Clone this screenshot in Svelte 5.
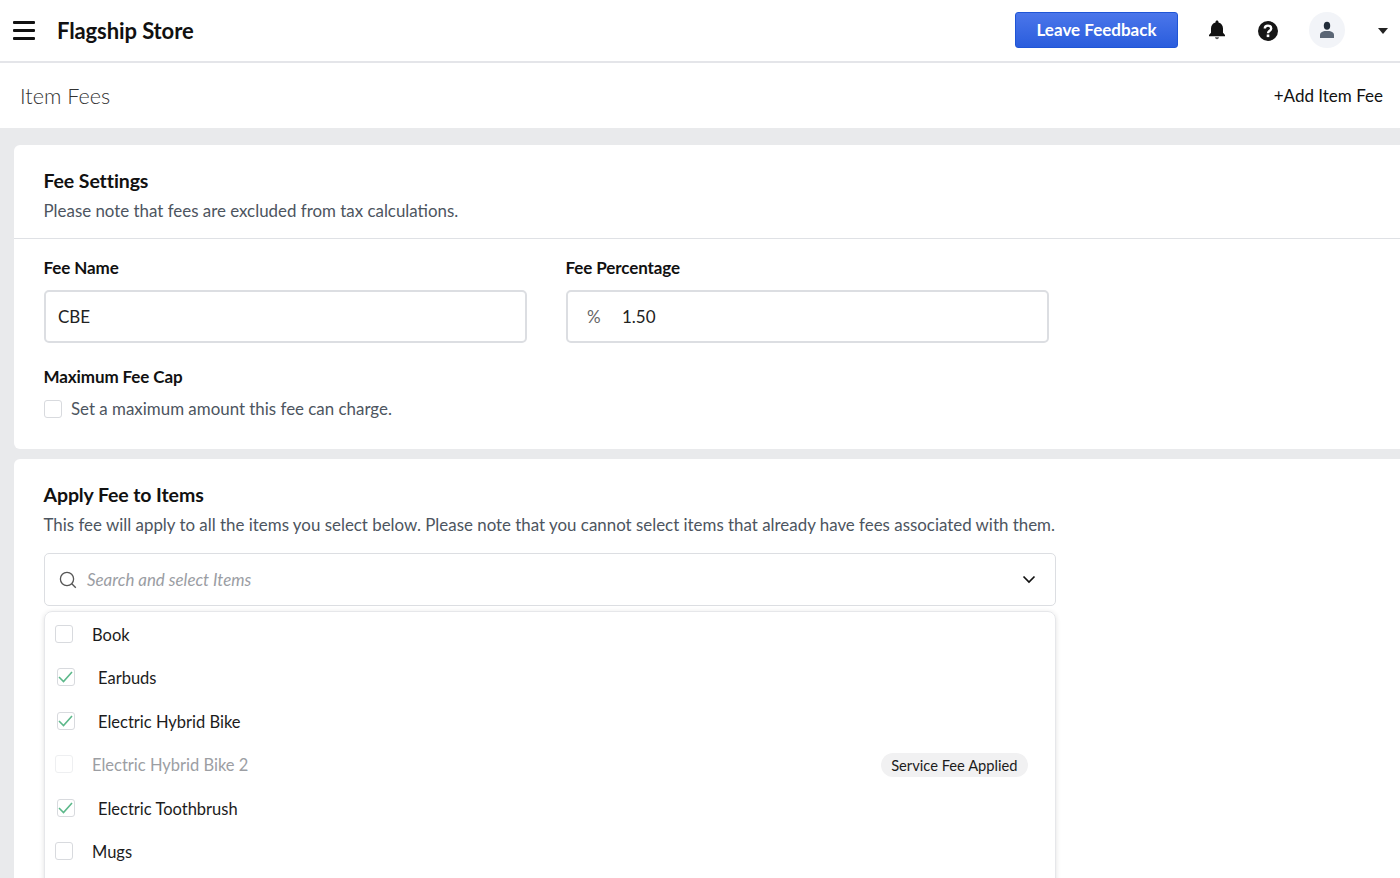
<script lang="ts">
	const items = [
		{ name: 'Book', state: 'off' },
		{ name: 'Earbuds', state: 'on' },
		{ name: 'Electric Hybrid Bike', state: 'on' },
		{ name: 'Electric Hybrid Bike 2', state: 'disabled', tag: 'Service Fee Applied' },
		{ name: 'Electric Toothbrush', state: 'on' },
		{ name: 'Mugs', state: 'off' }
	];
</script>

<div class="page">
	<header class="topbar">
		<button class="menu" aria-label="Menu">
			<span></span><span></span><span></span>
		</button>
		<div class="store">Flagship Store</div>
		<button class="feedback">Leave Feedback</button>
		<svg class="bell" width="20" height="22" viewBox="0 0 20 22">
			<path fill="#111" d="M10 1.5c-.9 0-1.5.6-1.5 1.5v.6C5.6 4.3 4 6.700 4 9.500v4.200L2 16v1.200h16V16l-2-2.300V9.500c0-2.800-1.600-5.200-4.500-5.900V3c0-.9-.6-1.500-1.500-1.500z" />
			<path fill="#555" d="M8 18.300h4c0 1.100-.9 1.900-2 1.900s-2-.8-2-1.900z" />
		</svg>
		<svg class="help" width="22" height="22" viewBox="0 0 22 22">
			<circle cx="11" cy="11" r="10" fill="#161616" />
			<path fill="none" stroke="#fff" stroke-width="2.400" d="M7.800 8.600c0-1.900 1.400-3 3.200-3s3.200 1.100 3.200 2.800c0 2.400-3.200 2.300-3.200 4.800" />
			<rect x="9.700" y="14.500" width="2.600" height="2.600" fill="#fff" />
		</svg>
		<div class="avatar">
			<svg width="16" height="18" viewBox="0 0 16 18">
				<ellipse cx="8" cy="4.800" rx="3.200" ry="4" fill="#222d3a" />
				<path fill="#5b6675" d="M1 17v-3.500c0-1.700 2.500-3 4.500-3.500h5c2 .5 4.500 1.800 4.500 3.500V17z" />
			</svg>
		</div>
		<div class="caret"></div>
	</header>

	<section class="pagehead">
		<h1>Item Fees</h1>
		<button class="add">+Add Item Fee</button>
	</section>

	<main class="content">
		<section class="card first">
			<div class="card-head">
				<h2>Fee Settings</h2>
				<p>Please note that fees are excluded from tax calculations.</p>
			</div>
			<div class="fields">
				<div class="row">
					<div class="field">
						<div class="label">Fee Name</div>
						<div class="input">CBE</div>
					</div>
					<div class="field">
						<div class="label">Fee Percentage</div>
						<div class="input"><span class="prefix">%</span>1.50</div>
					</div>
				</div>
				<div class="label cap">Maximum Fee Cap</div>
				<div class="capline">
					<span class="box"></span>
					<span>Set a maximum amount this fee can charge.</span>
				</div>
			</div>
		</section>

		<section class="card second">
			<h2>Apply Fee to Items</h2>
			<p>This fee will apply to all the items you select below. Please note that you cannot select items that already have fees associated with them.</p>
			<div class="search">
				<svg width="18" height="18" viewBox="0 0 18 18" fill="none" stroke="#555" stroke-width="1.300">
					<circle cx="8" cy="8" r="6.600" />
					<path d="M12.800 12.800l4 4" />
				</svg>
				<span class="placeholder">Search and select Items</span>
				<svg class="chev" width="14" height="9" viewBox="0 0 14 9" fill="none" stroke="#111" stroke-width="1.700">
					<path d="M1.500 1.500L7 7l5.500-5.500" />
				</svg>
			</div>
			<div class="list">
				{#each items as item}
					<div class="item {item.state}">
						<span class="box">
							{#if item.state === 'on'}
								<svg width="15" height="12" viewBox="0 0 15 12" fill="none" stroke="#5cb88a" stroke-width="1.600">
									<path d="M1 6l4.500 4.500L14 1" />
								</svg>
							{/if}
						</span>
						<span class="name">{item.name}</span>
						{#if item.tag}
							<span class="tag">{item.tag}</span>
						{/if}
					</div>
				{/each}
			</div>
		</section>
	</main>
</div>

<style>
	:global(body) {
		background: #e9eaec;
		font-family: Lato, 'Liberation Sans', sans-serif;
		color: #111;
	}

	button {
		font-family: inherit;
		border: none;
		background: none;
		padding: 0;
	}

	.page {
		height: 878px;
		overflow: hidden;
	}

	.topbar {
		display: flex;
		align-items: center;
		height: 61px;
		background: #fff;
		border-bottom: 2px solid #e4e5e9;
	}
	.menu {
		display: flex;
		flex-direction: column;
		gap: 5px;
		width: 22px;
		margin-left: 13px;
	}
	.menu span {
		height: 3px;
		background: #111;
		border-radius: 1px;
	}
	.store {
		margin-left: 22px;
		font-size: 22px;
		font-weight: 700;
		letter-spacing: -0.1px;
	}
	.feedback {
		margin: 0 0 2px auto;
		width: 163px;
		height: 36px;
		padding-bottom: 1px;
		border-radius: 3px;
		border: 1px solid #1f55d6;
		background: linear-gradient(#4b76ea, #2a5ddd);
		color: #fff;
		font-size: 17px;
		font-weight: 700;
	}
	.bell {
		margin: 0 0 1px 29px;
	}
	.help {
		margin-left: 30px;
	}
	.avatar {
		display: flex;
		align-items: center;
		justify-content: center;
		width: 36px;
		height: 36px;
		margin: 0 0 2px 30px;
		border-radius: 50%;
		background: #f2f4f8;
	}
	.caret {
		margin: 0 12px 0 33px;
		border-top: 6px solid #222;
		border-left: 5px solid transparent;
		border-right: 5px solid transparent;
	}

	.pagehead {
		display: flex;
		align-items: center;
		justify-content: space-between;
		height: 65px;
		padding: 0 17px 1px 20px;
		box-sizing: border-box;
		background: #fff;
	}
	h1 {
		margin: 2px 0 0;
		font-size: 21.600px;
		font-weight: 300;
		color: #333;
	}
	.add {
		font-size: 17px;
		color: #111;
	}

	.content {
		padding: 17px 0 0 14px;
	}
	.card {
		background: #fff;
		border-radius: 6px 0 0 6px;
	}
	.first {
		height: 304px;
		margin-bottom: 10px;
	}
	.card-head {
		height: 94px;
		padding: 23px 30px 0 29.500px;
		box-sizing: border-box;
		border-bottom: 1px solid #dfe1e5;
	}
	h2 {
		margin: 0;
		font-size: 19.500px;
		line-height: 26px;
		font-weight: 700;
		letter-spacing: -0.1px;
	}
	p {
		margin: 5px 0 0;
		font-size: 16.900px;
		line-height: 24px;
		color: #4d5560;
	}
	.fields {
		padding: 17px 30px 0 29.500px;
	}
	.row {
		display: flex;
		gap: 39px;
	}
	.field {
		width: 483px;
	}
	.label {
		font-size: 17px;
		line-height: 24px;
		font-weight: 700;
		letter-spacing: -0.1px;
	}
	.input {
		display: flex;
		align-items: center;
		height: 53px;
		margin-top: 10px;
		padding: 0 12.500px;
		box-sizing: border-box;
		border: 2px solid #dcdee2;
		border-radius: 5px;
		font-size: 17px;
		color: #222;
	}
	.prefix {
		width: 42px;
		padding-left: 7px;
		box-sizing: border-box;
		color: #666;
	}
	.cap {
		margin-top: 22px;
	}
	.capline {
		display: flex;
		align-items: center;
		gap: 9.500px;
		margin-top: 8px;
		font-size: 16.900px;
		line-height: 24px;
		color: #4d5560;
	}
	.box {
		display: flex;
		align-items: center;
		justify-content: center;
		flex: none;
		width: 18px;
		height: 18px;
		box-sizing: border-box;
		border: 1px solid #d8dade;
		border-radius: 3px;
		background: #fff;
	}

	.second {
		height: 500px;
		padding: 23px 30px 0 29.500px;
		box-sizing: border-box;
	}
	.search {
		display: flex;
		align-items: center;
		gap: 10.500px;
		width: 1012px;
		height: 53px;
		margin-top: 16px;
		padding: 0 19px 0 14px;
		box-sizing: border-box;
		border: 1px solid #dcdee2;
		border-radius: 5px;
	}
	.placeholder {
		font-size: 16.900px;
		font-style: italic;
		color: #9a9da3;
	}
	.chev {
		margin-left: auto;
	}
	.list {
		width: 1012px;
		margin-top: 5px;
		padding-top: 1px;
		box-sizing: border-box;
		border: 1px solid #e6e7ea;
		border-radius: 8px;
		box-shadow: 0 1px 5px rgba(0, 0, 0, 0.12);
		height: 400px;
	}
	.item {
		display: flex;
		align-items: center;
		height: 43.500px;
		padding-left: 10px;
		font-size: 16.500px;
		color: #1c1c1c;
	}
	.item .box {
		margin-bottom: 2px;
	}
	.item .name {
		margin-left: 19.500px;
	}
	.item.on {
		padding-left: 12px;
	}
	.item.on .name {
		margin-left: 23.500px;
	}
	.item.disabled {
		color: #9c9ea3;
	}
	.item.disabled .box {
		border-color: #eeeff1;
	}
	.tag {
		margin: 0 27px 0 auto;
		padding: 0 10px;
		height: 24px;
		line-height: 24px;
		border-radius: 12px;
		background: #f1f1f2;
		font-size: 14.700px;
		color: #1c1c1c;
	}
</style>
